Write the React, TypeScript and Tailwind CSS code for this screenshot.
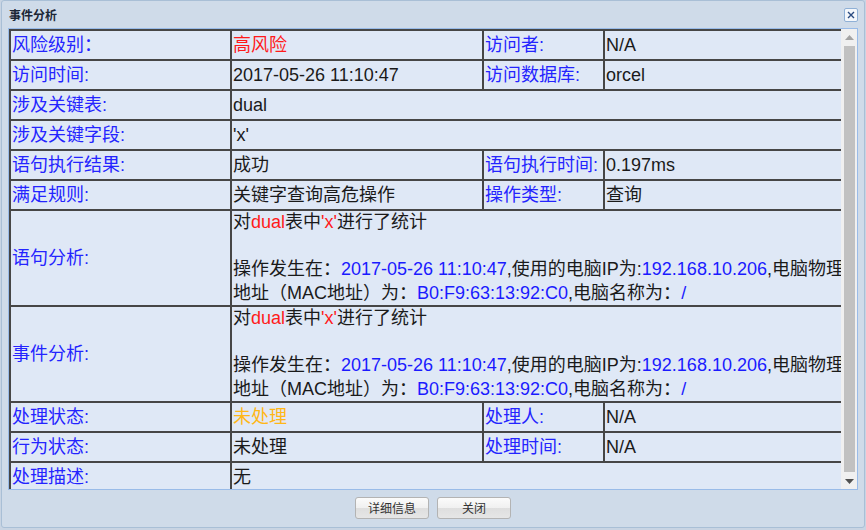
import React from 'react';

const font = { fontFamily: '"Liberation Sans", "Noto Sans CJK SC", sans-serif' };

const Blue: React.FC<{ children: React.ReactNode }> = ({ children }) => (
  <span className="text-[#1a1aff]">{children}</span>
);
const Red: React.FC<{ children: React.ReactNode }> = ({ children }) => (
  <span className="text-[#ff1a1a]">{children}</span>
);

const labelCls = 'border-2 border-[#464646] px-[1px] text-[#2424ff] whitespace-nowrap align-middle';
const valueCls = 'border-2 border-[#464646] px-[1px] text-[#1a1a1a] whitespace-nowrap align-middle';

function Analysis() {
  return (
    <div className="leading-[23.5px] h-[94px] overflow-hidden w-[610px]">
      <div>
        对<Red>dual</Red>表中<Red>'x'</Red>进行了统计
      </div>
      <div>&nbsp;</div>
      <div>
        操作发生在：<Blue>2017-05-26 11:10:47</Blue>,使用的电脑IP为:<Blue>192.168.10.206</Blue>,电脑物理
      </div>
      <div>
        地址（MAC地址）为：<Blue>B0:F9:63:13:92:C0</Blue>,电脑名称为：<Blue>/</Blue>
      </div>
    </div>
  );
}

function Scrollbar() {
  return (
    <div className="w-[16px] bg-[#f0f0f0] flex flex-col items-center">
      <div className="h-[16px] flex items-center justify-center">
        <svg width="9" height="5" viewBox="0 0 9 5">
          <path d="M0 5 L4.5 0 L9 5 Z" fill="#a3a3a3" />
        </svg>
      </div>
      <div className="w-[11px] flex-1 bg-[#c1c1c1] my-[1px]" />
      <div className="h-[16px] flex items-center justify-center">
        <svg width="9" height="5" viewBox="0 0 9 5">
          <path d="M0 0 L9 0 L4.5 5 Z" fill="#505050" />
        </svg>
      </div>
    </div>
  );
}

export default function App() {
  return (
    <div className="w-[866px] h-[530px] bg-[#c8d4e3]" style={font}>
      <div className="w-[864px] h-[528px] ml-[1px] bg-[#cfdbe9] border border-[#a9bfd6] rounded-[3px] flex flex-col">
        {/* title bar */}
        <div className="h-[27px] flex items-center justify-between pl-[7px] pr-[6px]">
          <span
            className="text-[12px] font-bold text-[#1b2636]"
            style={{ fontFamily: '"Noto Sans CJK SC", sans-serif' }}
          >
            事件分析
          </span>
          <div className="w-[14px] h-[14px] bg-[#f4f7fb] border border-[#8fb0d6] rounded-[2px] flex items-center justify-center">
            <svg width="8" height="8" viewBox="0 0 8 8">
              <path d="M1 1 L7 7 M7 1 L1 7" stroke="#2a4a80" strokeWidth="1.4" />
            </svg>
          </div>
        </div>

        {/* content */}
        <div className="mx-[6px] h-[462px] border border-[#99bbe8] bg-[#dfe8f6] flex overflow-hidden">
          <div className="flex-1 overflow-hidden">
            <table className="border-collapse text-[18px] leading-[24px] table-fixed w-[835px]">
              <colgroup>
                <col className="w-[221px]" />
                <col className="w-[252px]" />
                <col className="w-[121px]" />
                <col className="w-[241px]" />
              </colgroup>
              <tbody>
                <tr className="h-[30px]">
                  <td className={labelCls}>风险级别：</td>
                  <td className={valueCls}>
                    <span className="text-[#ff1a1a]">高风险</span>
                  </td>
                  <td className={labelCls}>访问者:</td>
                  <td className={valueCls}>N/A</td>
                </tr>
                <tr className="h-[30px]">
                  <td className={labelCls}>访问时间:</td>
                  <td className={valueCls}>2017-05-26 11:10:47</td>
                  <td className={labelCls}>访问数据库:</td>
                  <td className={valueCls}>orcel</td>
                </tr>
                <tr className="h-[30px]">
                  <td className={labelCls}>涉及关键表:</td>
                  <td className={valueCls} colSpan={3}>dual</td>
                </tr>
                <tr className="h-[30px]">
                  <td className={labelCls}>涉及关键字段:</td>
                  <td className={valueCls} colSpan={3}>'x'</td>
                </tr>
                <tr className="h-[30px]">
                  <td className={labelCls}>语句执行结果:</td>
                  <td className={valueCls}>成功</td>
                  <td className={labelCls}>语句执行时间:</td>
                  <td className={valueCls}>0.197ms</td>
                </tr>
                <tr className="h-[30px]">
                  <td className={labelCls}>满足规则:</td>
                  <td className={valueCls}>关键字查询高危操作</td>
                  <td className={labelCls}>操作类型:</td>
                  <td className={valueCls}>查询</td>
                </tr>
                <tr>
                  <td className={labelCls}>语句分析:</td>
                  <td className={`${valueCls} !align-top !p-0 !pl-[1px]`} colSpan={3}>
                    <Analysis />
                  </td>
                </tr>
                <tr>
                  <td className={labelCls}>事件分析:</td>
                  <td className={`${valueCls} !align-top !p-0 !pl-[1px]`} colSpan={3}>
                    <Analysis />
                  </td>
                </tr>
                <tr className="h-[30px]">
                  <td className={labelCls}>处理状态:</td>
                  <td className={valueCls}>
                    <span className="text-[#ffb717]">未处理</span>
                  </td>
                  <td className={labelCls}>处理人:</td>
                  <td className={valueCls}>N/A</td>
                </tr>
                <tr className="h-[30px]">
                  <td className={labelCls}>行为状态:</td>
                  <td className={valueCls}>未处理</td>
                  <td className={labelCls}>处理时间:</td>
                  <td className={valueCls}>N/A</td>
                </tr>
                <tr className="h-[30px]">
                  <td className={labelCls}>处理描述:</td>
                  <td className={valueCls} colSpan={3}>无</td>
                </tr>
              </tbody>
            </table>
          </div>
          <Scrollbar />
        </div>

        {/* footer buttons */}
        <div className="flex justify-center gap-[8px] pt-[7px]">
          {['详细信息', '关闭'].map((t) => (
            <button
              key={t}
              className="w-[74px] h-[22px] rounded-[3px] border border-[#b3b3b3] text-[12px] text-[#333] bg-[linear-gradient(#fbfbfb_0%,#f0f0f0_50%,#dedede_51%,#e6e6e6_100%)]"
              style={{ fontFamily: '"Noto Sans CJK SC", sans-serif' }}
            >
              {t}
            </button>
          ))}
        </div>
      </div>
    </div>
  );
}
